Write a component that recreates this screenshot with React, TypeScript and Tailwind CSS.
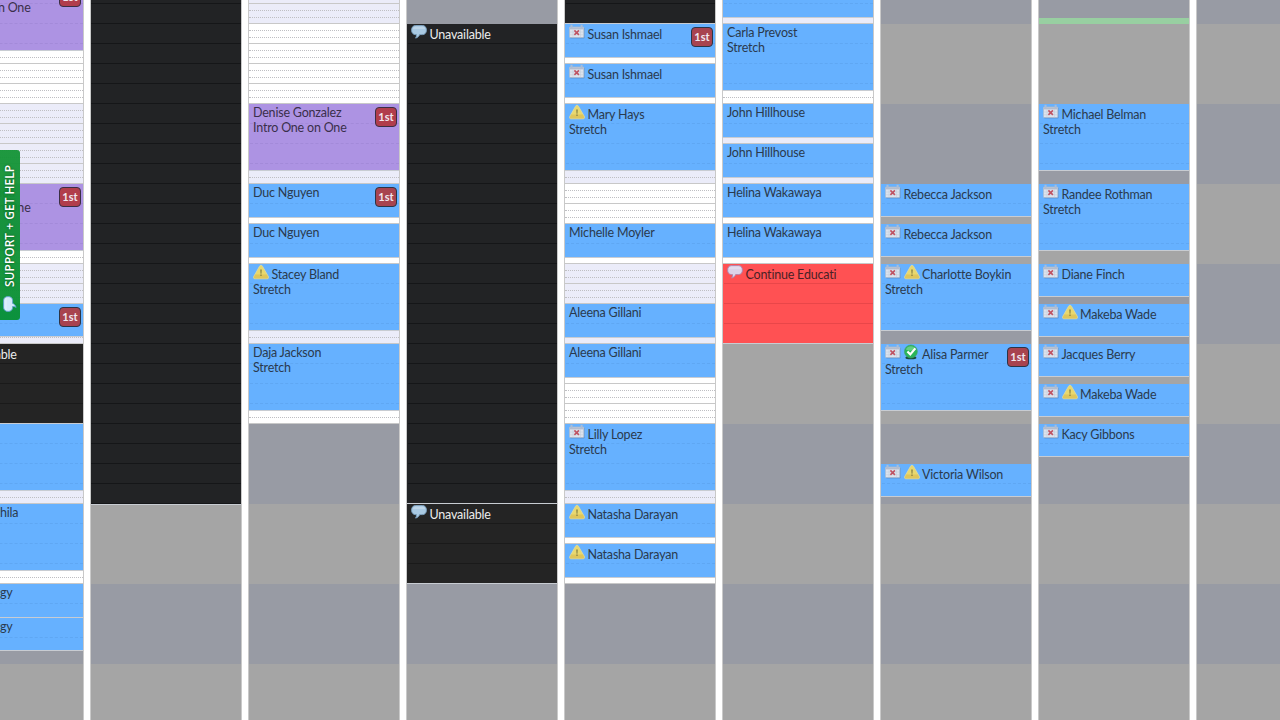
import React from "react";

type Zone = "open" | "off" | "block";
type IconName = "cal" | "warn" | "chat" | "check";
type Tone = "blue" | "purple" | "dark" | "darker" | "red" | "green";

interface Booking {
  at: number;
  end: number;
  tone?: Tone;
  icons?: IconName[];
  name?: string;
  note?: string;
  first?: boolean;
  indent?: boolean;
}

interface Column {
  zones: [number, Zone][];
  bookings: Booking[];
}

const DAY_START = -16;
const ROW = 20;
const ROWS = 37;

function CalendarIcon() {
  return (
    <svg viewBox="0 0 16 16" className="inline-block size-4 shrink-0">
      <rect x="1" y="3.6" width="14.6" height="10.8" rx="1" fill="#4d6f9b" opacity=".45" />
      <rect x="0.4" y="2.9" width="14.4" height="10.6" rx="0.8" fill="#dde3ed" stroke="#a9b7ca" strokeWidth=".7" />
      <rect x="0.8" y="3.2" width="13.6" height="2.2" fill="#b3bccd" />
      <path d="M1 8h13.500M1 10.800h13.500M4 5.500v8M11.400 5.500v8" stroke="#bfc9d8" strokeWidth=".5" />
      <path d="M2.500 .8v3.200M12.600 .8v3.200" stroke="#a9bdd8" strokeWidth="2" />
      <path d="M5.400 6.400l4.500 4.500M9.900 6.400l-4.500 4.500" stroke="#bf5363" strokeWidth="1.600" />
    </svg>
  );
}

function WarnIcon() {
  return (
    <svg viewBox="0 0 16 16" className="inline-block size-4 shrink-0">
      <path d="M8 1.200c.7 0 1.100.4 1.500 1.100l5.900 10.300c.6 1.100 0 2.200-1.200 2.200H1.900c-1.200 0-1.800-1.100-1.200-2.200L6.500 2.300C6.900 1.600 7.300 1.200 8 1.200z" fill="#e8d86e" stroke="#dedaa2" strokeWidth=".8" />
      <path d="M2 10.600h12l1 2.300c.2.900-.3 1.500-1 1.500H2c-.8 0-1.300-.7-1-1.500z" fill="#d8bd52" opacity=".65" />
      <path d="M7.200 5.500h1.600l-.3 4.200h-1zM7.300 10.600h1.400v1.500H7.300z" fill="#8a8648" />
    </svg>
  );
}

function ChatIcon({ tint }: { tint: "blue" | "rose" | "white" }) {
  const fill = tint === "blue" ? "#a9c9e2" : tint === "rose" ? "#dcd3ea" : "#d4e9fb";
  const edge = tint === "blue" ? "#7fa6c6" : tint === "rose" ? "#ad83ad" : "#5f9fd0";
  return (
    <svg viewBox="0 0 16 16" className="inline-block size-4 shrink-0">
      <path d="M4.500 1.600h7c2.400 0 3.900 1.700 3.900 4.500s-1.500 4.500-3.900 4.500H8.600c-.6 1.700-1.900 2.900-4 3.500.8-1 1-2.200.9-3.500h-1C2.100 10.600.6 8.900.6 6.100s1.500-4.500 3.900-4.500z" fill={fill} stroke={edge} strokeWidth=".9" />
      <path d="M4.500 2.500h7c1.400 0 2.500.9 2.800 2.400H1.700c.3-1.500 1.400-2.400 2.800-2.400z" fill="#fff" opacity=".22" />
    </svg>
  );
}

function CheckIcon() {
  return (
    <svg viewBox="0 0 16 16" className="inline-block size-4 shrink-0">
      <ellipse cx="6.900" cy="13.700" rx="5.500" ry="1.600" fill="#174c3c" />
      <circle cx="6.900" cy="7.500" r="6.500" fill="#2bb55a" stroke="#43a06b" strokeWidth=".6" />
      <path d="M1.900 5.500a5.500 5.500 0 0 1 10 0c-3 1.700-7 1.700-10 0z" fill="#8be0a2" opacity=".6" />
      <path d="M3.400 7.500l2.900 2.900 5-6" fill="none" stroke="#fff" strokeWidth="2.200" />
    </svg>
  );
}

function Icon({ name, tone }: { name: IconName; tone: Tone }) {
  if (name === "cal") return <CalendarIcon />;
  if (name === "warn") return <WarnIcon />;
  if (name === "check") return <CheckIcon />;
  return <ChatIcon tint={tone === "red" ? "rose" : "blue"} />;
}

const toneFill: Record<Tone, string> = {
  blue: "bg-[#66b1ff] text-[#2a3a4e]",
  purple: "bg-[#ad93e3] text-[#3a2f4b]",
  dark: "bg-[#222325] text-[#ececec]",
  darker: "bg-[#242424] text-[#ececec]",
  red: "bg-[#ff5153] text-[#4b2226]",
  green: "bg-[#98cfa1]",
};

const toneLine: Record<Tone, string> = {
  blue: "border-dashed border-[#5fa7f3]",
  purple: "border-dashed border-[#a38ad9]",
  dark: "border-solid border-[#151618]",
  darker: "border-solid border-[#1a1a1a]",
  red: "border-solid border-[#e94649]",
  green: "border-transparent",
};

function zoneAt(zones: [number, Zone][], y: number): Zone {
  let current: Zone = zones[0][1];
  for (const [from, zone] of zones) if (y >= from) current = zone;
  return current;
}

function SlotRow({ zone, odd }: { zone: Zone; odd: boolean }) {
  if (zone === "off") return <div className={odd ? "h-5 bg-[#989ba4]" : "h-5 bg-[#a5a5a5]"} />;
  if (zone === "block") return <div className="h-5 border-b border-[#151618] bg-[#222325]" />;
  return (
    <div className={`h-5 border-b border-[#c8c8c8] ${odd ? "bg-[#ebecf9]" : "bg-white"}`}>
      <div className="h-[7px] border-b border-dotted border-[#bfbfc3]" />
      <div className="h-[7px] border-b border-dotted border-[#bfbfc3]" />
    </div>
  );
}

function BookingCard({ b }: { b: Booking }) {
  const tone = b.tone ?? "blue";
  const height = b.end - b.at + 1;
  if (tone === "green") return <div className="h-1.5 shrink-0 bg-[#98cfa1]" />;
  const lines = Math.ceil(height / ROW);
  return (
    <div
      className={`relative grid shrink-0 overflow-hidden border-b border-b-[#c8ccd2] ${toneFill[tone]}`}
      style={{ height }}
    >
      <div className="col-start-1 row-start-1 h-0">
        {Array.from({ length: lines }, (_, i) => (
          <div key={i} className={`ml-px h-5 border-b ${toneLine[tone]}`} />
        ))}
      </div>
      <div
        className={`col-start-1 row-start-1 text-[12.5px] leading-[15px] tracking-[-0.2px] whitespace-nowrap ${
          b.indent ? "pl-[67px]" : "pl-1"
        } ${b.icons ? "pt-0" : "pt-px"}`}
      >
        <div className={b.icons ? "flex h-[18px] gap-[2.5px]" : ""}>
          {b.icons?.map((n) => (
            <Icon key={n} name={n} tone={tone} />
          ))}
          <span className={b.icons ? "pt-[3px]" : ""}>{b.name}</span>
        </div>
        {b.note && <div>{b.note}</div>}
      </div>
      {b.first && (
        <span
          className={`absolute top-[3px] right-[2px] flex h-5 w-[22px] items-center justify-center rounded-[4px] border pb-px text-[11px] leading-none font-bold text-[#f1e6ee] ${
            tone === "purple" ? "border-[#3a2f44] bg-[#b13d4b]" : "border-[#2b3547] bg-[#a8434f]"
          }`}
        >
          1st
        </span>
      )}
    </div>
  );
}

function DayColumn({ col }: { col: Column }) {
  let cursor = DAY_START;
  return (
    <div className="w-[152px] shrink-0 border-x border-[#c9c9c9]">
      <div className="-mt-4 grid">
        <div className="col-start-1 row-start-1 flex flex-col">
          {Array.from({ length: ROWS }, (_, i) => {
            const y = DAY_START + i * ROW;
            const odd = Math.floor((y + 56) / 80) % 2 === 0;
            return <SlotRow key={i} zone={zoneAt(col.zones, y)} odd={odd} />;
          })}
        </div>
        <div className="col-start-1 row-start-1 flex flex-col">
          {col.bookings.map((b) => {
            const gap = b.at - cursor;
            cursor = b.end + 1;
            return (
              <React.Fragment key={b.at}>
                {gap > 0 && <div className="shrink-0" style={{ height: gap }} />}
                <BookingCard b={b} />
              </React.Fragment>
            );
          })}
        </div>
      </div>
    </div>
  );
}

const columns: Column[] = [
  {
    zones: [[-16, "open"], [584, "off"]],
    bookings: [
      { at: -16, end: 50, tone: "purple", name: "Amanda Rice", note: "Intro One on One", first: true },
      { at: 184, end: 250, tone: "purple", name: "Diana Miranda", note: "Intro One on One", first: true },
      { at: 304, end: 336, first: true },
      { at: 344, end: 423, tone: "darker", icons: ["chat"], name: "Unavailable" },
      { at: 424, end: 490 },
      { at: 504, end: 570, name: "hila", indent: true },
      { at: 584, end: 617, name: "gy", indent: true },
      { at: 618, end: 650, name: "gy", indent: true },
    ],
  },
  { zones: [[-16, "block"], [504, "off"]], bookings: [{ at: 504, end: 504 }] },
  {
    zones: [[-16, "open"], [424, "off"]],
    bookings: [
      { at: 104, end: 170, tone: "purple", name: "Denise Gonzalez", note: "Intro One on One", first: true },
      { at: 184, end: 217, name: "Duc Nguyen", first: true },
      { at: 224, end: 257, name: "Duc Nguyen" },
      { at: 264, end: 330, icons: ["warn"], name: "Stacey Bland", note: "Stretch" },
      { at: 344, end: 410, name: "Daja Jackson", note: "Stretch" },
    ],
  },
  {
    zones: [[-16, "off"]],
    bookings: [
      { at: 24, end: 503, tone: "dark", icons: ["chat"], name: "Unavailable" },
      { at: 504, end: 583, tone: "darker", icons: ["chat"], name: "Unavailable" },
    ],
  },
  {
    zones: [[-16, "block"], [24, "open"], [584, "off"]],
    bookings: [
      { at: -16, end: 23, tone: "dark" },
      { at: 24, end: 57, icons: ["cal"], name: "Susan Ishmael", first: true },
      { at: 64, end: 97, icons: ["cal"], name: "Susan Ishmael" },
      { at: 104, end: 170, icons: ["warn"], name: "Mary Hays", note: "Stretch" },
      { at: 224, end: 257, name: "Michelle Moyler" },
      { at: 304, end: 337, name: "Aleena Gillani" },
      { at: 344, end: 377, name: "Aleena Gillani" },
      { at: 424, end: 490, icons: ["cal"], name: "Lilly Lopez", note: "Stretch" },
      { at: 504, end: 537, icons: ["warn"], name: "Natasha Darayan" },
      { at: 544, end: 577, icons: ["warn"], name: "Natasha Darayan" },
    ],
  },
  {
    zones: [[-16, "open"], [344, "off"]],
    bookings: [
      { at: -16, end: 17 },
      { at: 24, end: 90, name: "Carla Prevost", note: "Stretch" },
      { at: 104, end: 137, name: "John Hillhouse" },
      { at: 144, end: 177, name: "John Hillhouse" },
      { at: 184, end: 217, name: "Helina Wakawaya" },
      { at: 224, end: 257, name: "Helina Wakawaya" },
      { at: 264, end: 343, tone: "red", icons: ["chat"], name: "Continue Educati" },
    ],
  },
  {
    zones: [[-16, "off"]],
    bookings: [
      { at: 184, end: 216, icons: ["cal"], name: "Rebecca Jackson" },
      { at: 224, end: 256, icons: ["cal"], name: "Rebecca Jackson" },
      { at: 264, end: 330, icons: ["cal", "warn"], name: "Charlotte Boykin", note: "Stretch" },
      { at: 344, end: 410, icons: ["cal", "check"], name: "Alisa Parmer", note: "Stretch", first: true },
      { at: 464, end: 496, icons: ["cal", "warn"], name: "Victoria Wilson" },
    ],
  },
  {
    zones: [[-16, "off"]],
    bookings: [
      { at: 18, end: 23, tone: "green" },
      { at: 104, end: 170, icons: ["cal"], name: "Michael Belman", note: "Stretch" },
      { at: 184, end: 250, icons: ["cal"], name: "Randee Rothman", note: "Stretch" },
      { at: 264, end: 296, icons: ["cal"], name: "Diane Finch" },
      { at: 304, end: 336, icons: ["cal", "warn"], name: "Makeba Wade" },
      { at: 344, end: 376, icons: ["cal"], name: "Jacques Berry" },
      { at: 384, end: 416, icons: ["cal", "warn"], name: "Makeba Wade" },
      { at: 424, end: 456, icons: ["cal"], name: "Kacy Gibbons" },
    ],
  },
  { zones: [[-16, "off"]], bookings: [] },
];

export default function App() {
  return (
    <div className="relative h-[720px] w-[1280px] overflow-hidden bg-white font-['Lato',sans-serif]">
      <div className="-ml-[68px] flex gap-[6px]">
        {columns.map((col, i) => (
          <DayColumn key={i} col={col} />
        ))}
      </div>
      <div className="absolute top-[150px] left-0 flex h-[170px] w-5 flex-col items-center rounded-r-[3px] bg-linear-to-b from-[#149436]/95 to-[#079033]/95 pt-[11px]">
        <span className="h-[126px] rotate-180 font-['Open_Sans',sans-serif] text-[12px] leading-5 font-semibold whitespace-nowrap text-white [text-shadow:0_0_2px_#064d18] [writing-mode:vertical-rl]">
          SUPPORT + GET HELP
        </span>
        <span className="mt-[9px] flex size-4 -rotate-90">
          <ChatIcon tint="white" />
        </span>
      </div>
    </div>
  );
}
